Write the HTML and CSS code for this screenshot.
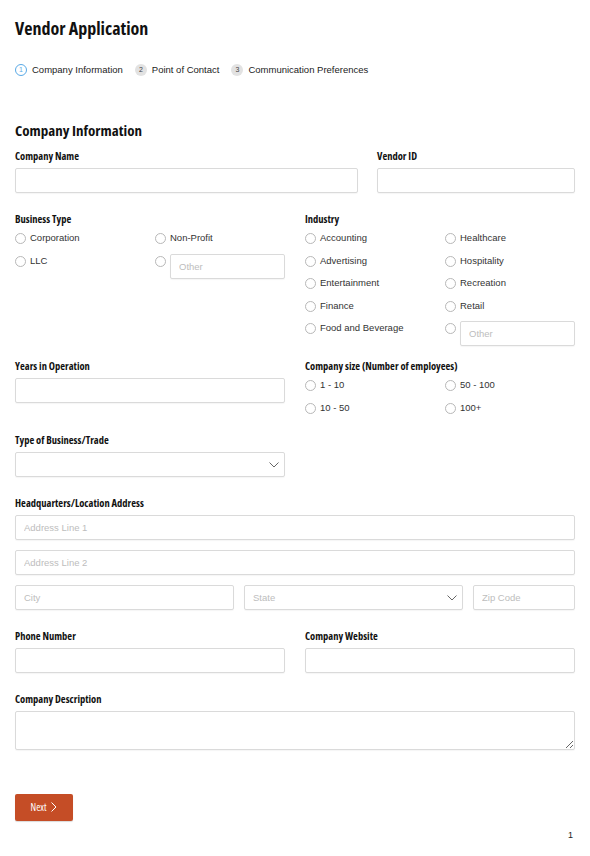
FILE: index.html
```html
<!DOCTYPE html>
<html>
  <head>
    <meta charset="utf-8">
    <link rel="stylesheet" href="styles.css">
    <title>Vendor Application</title>
  </head>
  <body>
    <div class="page">
      <h1 class="page-title">Vendor Application</h1>

      <ol class="steps">
        <li class="step step-active"><span class="step-num">1</span>Company Information</li>
        <li class="step"><span class="step-num">2</span>Point of Contact</li>
        <li class="step"><span class="step-num">3</span>Communication Preferences</li>
      </ol>

      <form class="form">
        <h2 class="section-title">Company Information</h2>

        <div class="row row-name">
          <div class="field">
            <label class="field-label">Company Name</label>
            <input class="text-input" type="text">
          </div>
          <div class="field">
            <label class="field-label">Vendor ID</label>
            <input class="text-input" type="text">
          </div>
        </div>

        <div class="row row-half row-tight">
          <div class="field">
            <div class="field-label">Business Type</div>
            <div class="options">
              <label class="option"><input type="radio" name="btype"><span>Corporation</span></label>
              <label class="option"><input type="radio" name="btype"><span>Non-Profit</span></label>
              <label class="option"><input type="radio" name="btype"><span>LLC</span></label>
              <label class="option"><input type="radio" name="btype"><input class="text-input other-input" type="text" placeholder="Other"></label>
            </div>
          </div>
          <div class="field">
            <div class="field-label">Industry</div>
            <div class="options">
              <label class="option"><input type="radio" name="industry"><span>Accounting</span></label>
              <label class="option"><input type="radio" name="industry"><span>Healthcare</span></label>
              <label class="option"><input type="radio" name="industry"><span>Advertising</span></label>
              <label class="option"><input type="radio" name="industry"><span>Hospitality</span></label>
              <label class="option"><input type="radio" name="industry"><span>Entertainment</span></label>
              <label class="option"><input type="radio" name="industry"><span>Recreation</span></label>
              <label class="option"><input type="radio" name="industry"><span>Finance</span></label>
              <label class="option"><input type="radio" name="industry"><span>Retail</span></label>
              <label class="option"><input type="radio" name="industry"><span>Food and Beverage</span></label>
              <label class="option"><input type="radio" name="industry"><input class="text-input other-input" type="text" placeholder="Other"></label>
            </div>
          </div>
        </div>

        <div class="row row-half row-size">
          <div class="field">
            <label class="field-label">Years in Operation</label>
            <input class="text-input" type="text">
          </div>
          <div class="field">
            <div class="field-label">Company size (Number of employees)</div>
            <div class="options">
              <label class="option"><input type="radio" name="size"><span>1 - 10</span></label>
              <label class="option"><input type="radio" name="size"><span>50 - 100</span></label>
              <label class="option"><input type="radio" name="size"><span>10 - 50</span></label>
              <label class="option"><input type="radio" name="size"><span>100+</span></label>
            </div>
          </div>
        </div>

        <div class="row row-half">
          <div class="field">
            <label class="field-label">Type of Business/Trade</label>
            <div class="select-wrap">
              <select class="text-input select-input"><option></option></select>
              <svg class="select-arrow" width="10" height="6" viewBox="0 0 10 6"><path d="M0.5 0.5 L5 5 L9.5 0.5" fill="none" stroke="#666" stroke-width="1"/></svg>
            </div>
          </div>
        </div>

        <div class="row">
          <div class="field">
            <label class="field-label">Headquarters/Location Address</label>
            <div class="address">
              <input class="text-input" type="text" placeholder="Address Line 1">
              <input class="text-input" type="text" placeholder="Address Line 2">
              <div class="address-city">
                <input class="text-input" type="text" placeholder="City">
                <div class="select-wrap">
                  <select class="text-input select-input placeholder-select"><option>State</option></select>
                  <svg class="select-arrow" width="10" height="6" viewBox="0 0 10 6"><path d="M0.5 0.5 L5 5 L9.5 0.5" fill="none" stroke="#666" stroke-width="1"/></svg>
                </div>
                <input class="text-input" type="text" placeholder="Zip Code">
              </div>
            </div>
          </div>
        </div>

        <div class="row row-half">
          <div class="field">
            <label class="field-label">Phone Number</label>
            <input class="text-input" type="text">
          </div>
          <div class="field">
            <label class="field-label">Company Website</label>
            <input class="text-input" type="text">
          </div>
        </div>

        <div class="row row-last">
          <div class="field">
            <label class="field-label">Company Description</label>
            <textarea class="text-input text-area"></textarea>
          </div>
        </div>

        <button class="next-btn" type="button">Next<svg class="next-arrow" width="6" height="10" viewBox="0 0 6 10"><path d="M0.5 0.5 L5 5 L0.5 9.5" fill="none" stroke="#fff" stroke-width="1"/></svg></button>
      </form>

      <div class="page-num">1</div>
    </div>
  </body>
</html>
```

FILE: styles.css
```css
* {
  box-sizing: border-box;
}
body {
  margin: 0;
  background-color: #fff;
  font-family: "Liberation Sans", Arial, sans-serif;
  color: #333;
}
.page {
  padding: 0 15px;
}

.page-title,
.section-title,
.field-label,
.next-btn {
  font-family: "Open Sans", "DejaVu Sans Condensed", sans-serif;
  font-stretch: condensed;
  font-weight: 700;
  color: #111;
}
.page-title {
  margin: 16px 0 0;
  font-size: 18px;
  line-height: 24px;
}

/* steps */
.steps {
  display: flex;
  margin: 23px 0 0;
  padding: 0;
  list-style: none;
  font-size: 9.5px;
  line-height: 14px;
  color: #222;
}
.step {
  display: flex;
  align-items: center;
  margin-right: 12px;
}
.step-num {
  display: inline-flex;
  align-items: center;
  justify-content: center;
  width: 12px;
  height: 12px;
  margin-right: 5px;
  border-radius: 50%;
  background-color: #e2e2e2;
  font-size: 7px;
  color: #444;
}
.step-active .step-num {
  background-color: #fff;
  border: 1px solid #59a9e6;
  color: #59a9e6;
}

/* form */
.form {
  margin: 0;
}
.section-title {
  margin: 43px 0 10px;
  font-size: 15px;
  line-height: 20px;
}
.row {
  display: grid;
  grid-template-columns: 1fr;
  column-gap: 20px;
  margin-bottom: 20px;
}
.row-name {
  grid-template-columns: 343px 1fr;
  column-gap: 19px;
}
.row-half {
  grid-template-columns: 1fr 1fr;
}
.row-tight {
  margin-bottom: 14px;
}
.row-size {
  margin-bottom: 19px;
}
.row-last {
  margin-bottom: 44px;
}
.field {
  display: flex;
  flex-direction: column;
  min-width: 0;
}
.field-label {
  display: block;
  margin-bottom: 6px;
  font-size: 10.5px;
  line-height: 12px;
}

.text-input {
  display: block;
  width: 100%;
  height: 25px;
  margin: 0;
  padding: 0 8px;
  border: 1px solid #dadada;
  border-radius: 2px;
  box-shadow: 0 1px 1px rgba(0, 0, 0, 0.04);
  background-color: #fff;
  font-family: "Liberation Sans", Arial, sans-serif;
  font-size: 9.5px;
  color: #333;
  outline: none;
}
.text-input::placeholder {
  color: #bdbdbd;
}
.text-area {
  height: 39px;
  padding: 6px 8px;
  resize: vertical;
}

.select-wrap {
  position: relative;
}
.select-input {
  appearance: none;
  -webkit-appearance: none;
}
.placeholder-select {
  color: #bdbdbd;
}
.select-arrow {
  position: absolute;
  right: 6px;
  top: 10px;
  pointer-events: none;
}

/* radio options */
.options {
  display: grid;
  grid-template-columns: 1fr 1fr;
  column-gap: 10px;
  row-gap: 8.5px;
}
.option {
  display: flex;
  align-items: flex-start;
  min-width: 0;
  font-size: 9.5px;
  line-height: 14px;
  color: #333;
}
.option input[type="radio"] {
  appearance: none;
  -webkit-appearance: none;
  flex: none;
  width: 11px;
  height: 11px;
  margin: 2px 4px 0 0;
  border: 1px solid #b8b8b8;
  border-radius: 50%;
  background-color: #fff;
}
.other-input {
  flex: 1;
  width: auto;
  min-width: 0;
}

.address {
  display: flex;
  flex-direction: column;
  gap: 10px;
}
.address-city {
  display: grid;
  grid-template-columns: 219px 219px 1fr;
  column-gap: 10px;
}

/* next button */
.next-btn {
  display: flex;
  align-items: center;
  justify-content: center;
  width: 58px;
  height: 27px;
  padding: 0;
  border: 0;
  border-radius: 2px;
  background-color: #c54d26;
  box-shadow: 0 1px 1px rgba(0, 0, 0, 0.15);
  font-size: 10px;
  font-weight: 400;
  color: #fff;
  cursor: pointer;
}
.next-arrow {
  margin-left: 5px;
}

.page-num {
  margin-top: 9px;
  text-align: right;
  padding-right: 2px;
  font-size: 9px;
  line-height: 10px;
  color: #222;
}
```
